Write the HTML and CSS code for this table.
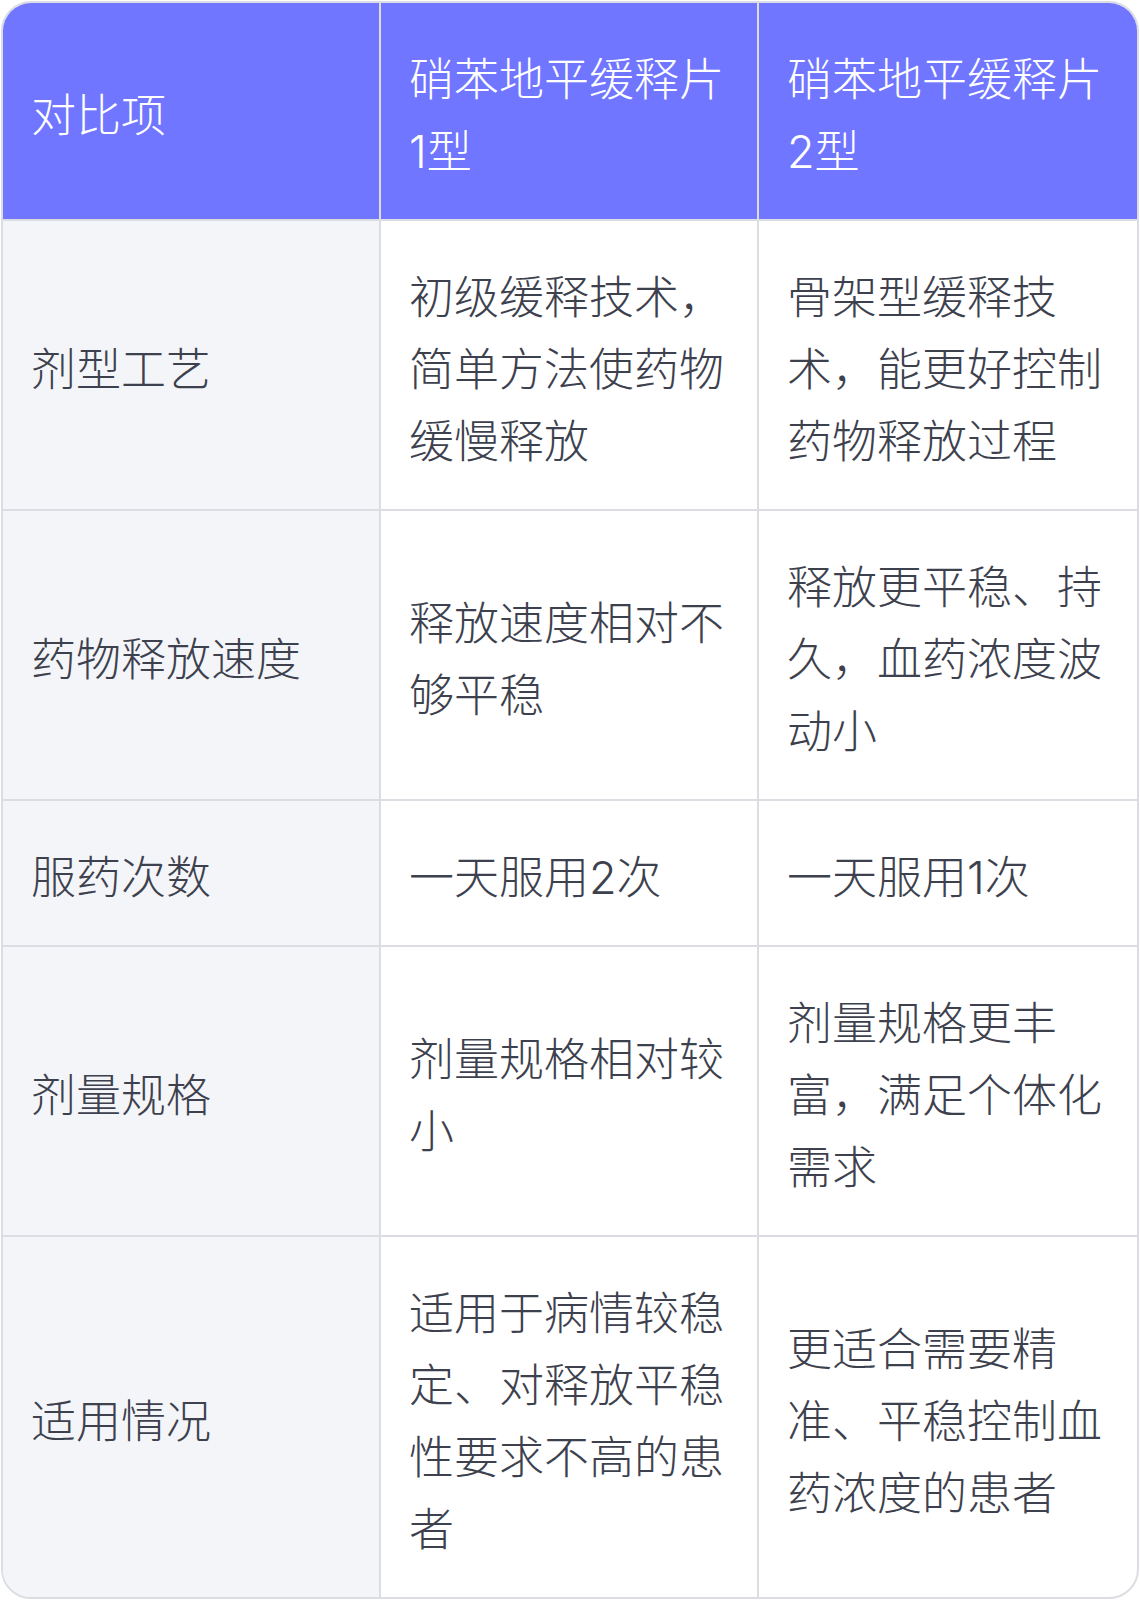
FILE: index.html
```html
<!DOCTYPE html>
<html lang="zh-CN">
<head>
<meta charset="utf-8">
<title>对比表</title>
<link rel="stylesheet" href="styles.css">
</head>
<body>
<div class="table">
  <div class="cell head">对比项</div>
  <div class="cell head">硝苯地平缓释片1型</div>
  <div class="cell head last">硝苯地平缓释片2型</div>

  <div class="cell label">剂型工艺</div>
  <div class="cell">初级缓释技术，简单方法使药物缓慢释放</div>
  <div class="cell last">骨架型缓释技术，能更好控制药物释放过程</div>

  <div class="cell label">药物释放速度</div>
  <div class="cell">释放速度相对不够平稳</div>
  <div class="cell last">释放更平稳、持久，血药浓度波动小</div>

  <div class="cell label">服药次数</div>
  <div class="cell">一天服用2次</div>
  <div class="cell last">一天服用1次</div>

  <div class="cell label">剂量规格</div>
  <div class="cell">剂量规格相对较小</div>
  <div class="cell last">剂量规格更丰富，满足个体化需求</div>

  <div class="cell label bottom">适用情况</div>
  <div class="cell bottom">适用于病情较稳定、对释放平稳性要求不高的患者</div>
  <div class="cell last bottom">更适合需要精准、平稳控制血药浓度的患者</div>
</div>
</body>
</html>
```
FILE: styles.css
```css
html, body {
  margin: 0;
  padding: 0;
  background: #ffffff;
}
body {
  padding: 1px;
  font-family: Inter, "Noto Sans CJK SC", "Noto Sans", sans-serif;
  font-weight: 300;
}
.table {
  width: 1138px;
  box-sizing: border-box;
  border: 2px solid #dcdde3;
  border-radius: 30px;
  overflow: hidden;
  display: grid;
  grid-template-columns: 1fr 1fr 1fr;
  background: #ffffff;
}
.cell {
  display: flex;
  align-items: center;
  padding: 41px 28px 31px;
  font-size: 45px;
  line-height: 72px;
  color: #3d414e;
  border-right: 2px solid #dcdde3;
  border-bottom: 2px solid #dcdde3;
  min-width: 0;
}
.cell.last {
  border-right: none;
}
.cell.bottom {
  border-bottom: none;
}
.head {
  background: #7076ff;
  color: #ffffff;
}
.label {
  background: #f4f5f9;
}
```
